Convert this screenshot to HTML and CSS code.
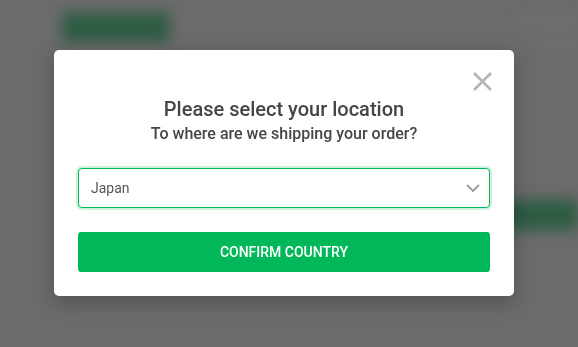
FILE: index.html
```html
<!DOCTYPE html>
<html lang="en">
<head>
<meta charset="utf-8">
<title>Select location</title>
<link rel="stylesheet" href="styles.css">
</head>
<body>
<div class="page" aria-hidden="true">
  <header class="page-head">
    <div class="logo"></div>
    <div class="head-right">
      <span class="ghost g1"></span>
      <span class="ghost g2"></span>
    </div>
  </header>
  <section class="page-body">
    <div class="cta"></div>
  </section>
</div>
<div class="overlay">
  <div class="modal" role="dialog" aria-labelledby="loc-title">
    <button class="close" type="button" aria-label="Close">
      <svg viewBox="0 0 21 21" width="21" height="21"><path d="M2 2 L19 19 M19 2 L2 19" stroke="#b5b5b5" stroke-width="2.6" fill="none"/></svg>
    </button>
    <h2 class="title" id="loc-title">Please select your location</h2>
    <p class="subtitle">To where are we shipping your order?</p>
    <div class="select-wrap">
      <select class="select"><option>Japan</option></select>
      <svg class="chevron" viewBox="0 0 14 8" width="14" height="8"><path d="M1 1 L7 7 L13 1" stroke="#9a9a9a" stroke-width="1.8" fill="none"/></svg>
    </div>
    <button class="confirm" type="button">CONFIRM COUNTRY</button>
  </div>
</div>
</body>
</html>
```

FILE: styles.css
```css
html, body {
  margin: 0;
  height: 100%;
}
body {
  background: #6b6b6b;
  font-family: Roboto, "Liberation Sans", sans-serif;
  overflow: hidden;
}
.page {
  filter: blur(7px);
}
.page-head {
  display: flex;
  justify-content: space-between;
  padding: 12px 0 0 62px;
}
.logo {
  width: 108px;
  height: 30px;
  background: #2f5c44;
  border-radius: 4px;
}
.head-right {
  display: flex;
  flex-direction: column;
  gap: 14px;
  padding-top: 4px;
}
.ghost {
  display: block;
  height: 10px;
  background: #717171;
}
.g1 { width: 60px; }
.g2 { width: 40px; margin-left: 20px; }
.page-body {
  display: flex;
  justify-content: flex-end;
  margin-top: 150px;
}
.cta {
  width: 120px;
  height: 30px;
  background: #2d5c43;
}
.overlay {
  position: fixed;
  inset: 0;
  display: flex;
  align-items: flex-start;
  justify-content: center;
  padding: 50px 10px 0 0;
  box-sizing: border-box;
}
.modal {
  position: relative;
  width: 460px;
  box-sizing: border-box;
  background: #fff;
  border-radius: 5px;
  padding: 47px 24px 24px;
  box-shadow: 0 6px 20px rgba(0, 0, 0, 0.25);
  text-align: center;
}
.close {
  position: absolute;
  top: 21px;
  right: 21px;
  width: 21px;
  height: 21px;
  padding: 0;
  border: 0;
  background: none;
  cursor: pointer;
}
.close svg { display: block; }
.title {
  margin: 0;
  font-size: 20px;
  line-height: 24px;
  font-weight: 500;
  color: #454545;
}
.subtitle {
  margin: 3px 0 0;
  font-size: 16px;
  line-height: 20px;
  font-weight: 500;
  color: #454545;
}
.select-wrap {
  position: relative;
  margin-top: 24px;
}
.select {
  appearance: none;
  -webkit-appearance: none;
  display: block;
  width: 100%;
  height: 40px;
  box-sizing: border-box;
  border: 1px solid #00b85a;
  border-radius: 4px;
  box-shadow: 0 0 0 2px #cdf1db;
  padding: 0 12px;
  font: 400 14px Roboto, "Liberation Sans", sans-serif;
  color: #555;
  background: #fff;
  outline: none;
}
.chevron {
  position: absolute;
  right: 10px;
  top: 16px;
  pointer-events: none;
}
.confirm {
  display: block;
  width: 100%;
  height: 40px;
  margin-top: 24px;
  border: 0;
  border-radius: 3px;
  background: #00b85a;
  color: #fff;
  font: 500 14px Roboto, "Liberation Sans", sans-serif;
  cursor: pointer;
}
```
